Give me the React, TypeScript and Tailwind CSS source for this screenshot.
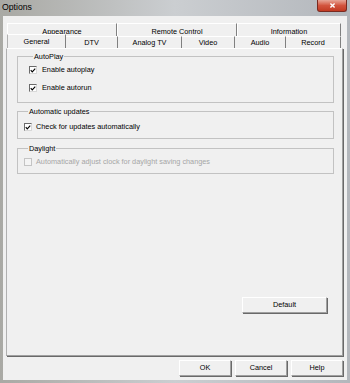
import React from "react";

const Check = ({ checked, disabled }: { checked?: boolean; disabled?: boolean }) => (
  <span
    className={`inline-flex shrink-0 w-[8px] h-[8px] items-center justify-center border ${
      disabled
        ? "border-[#c4c4c4] bg-[#f4f4f4]"
        : "border-t-[#6a6a6a] border-l-[#6a6a6a] border-r-[#d8d8d8] border-b-[#d8d8d8] bg-white"
    }`}
  >
    {checked && (
      <svg viewBox="0 0 8 8" className="w-[7px] h-[7px]">
        <path d="M1 3.6 L3 5.8 L7 1.4" stroke="#000" strokeWidth="1.5" fill="none" />
      </svg>
    )}
  </span>
);

const Btn = ({ label, w }: { label: string; w: string }) => (
  <div
    className={`${w} h-[16px] flex items-center justify-center bg-[#f0f0f0] border border-t-white border-l-white border-r-[#a0a0a0] border-b-[#a0a0a0] shadow-[1px_1px_0_#696969] text-[7.3px] leading-none`}
  >
    {label}
  </div>
);

const Group = ({ title, children, cls }: { title: string; children: React.ReactNode; cls: string }) => (
  <fieldset className={`border border-[#c2c2c2] ${cls}`}>
    <legend className="ml-[4px] px-[1px] text-[7.3px] leading-[9px]">{title}</legend>
    {children}
  </fieldset>
);

const backTabs = [
  { label: "Appearance", w: "w-[110px]" },
  { label: "Remote Control", w: "w-[120px]" },
  { label: "Information", w: "w-[104px]" },
];

const frontTabs = [
  { label: "DTV", w: "w-[52px]" },
  { label: "Analog TV", w: "w-[64px]" },
  { label: "Video", w: "w-[53px]" },
  { label: "Audio", w: "w-[51px]" },
  { label: "Record", w: "w-[55px]" },
];

export default function App() {
  return (
    <div className="w-[350px] h-[383px] flex flex-col overflow-hidden bg-gradient-to-r from-[#a9a9a4] via-[#cbced1] to-[#b3b7bc] font-['Liberation_Sans',Arial,sans-serif] text-black">
      {/* title bar */}
      <div className="h-[16px] shrink-0 flex items-start justify-between pl-[2px] pr-[3px]">
        <span className="text-[8.7px] leading-[14px]">Options</span>
        <div className="w-[30px] h-[12px] rounded-b-[3px] border border-t-0 border-[#7a2a20] bg-gradient-to-b from-[#e6a597] via-[#d2543e] to-[#c23a22] flex items-center justify-center">
          <svg viewBox="0 0 10 10" className="w-[7px] h-[7px]">
            <path d="M2 2 L8 8 M8 2 L2 8" stroke="#fff" strokeWidth="2" />
          </svg>
        </div>
      </div>

      {/* client area */}
      <div className="mx-[3px] h-[364px] bg-[#f0f0f0] flex flex-col">
        <div className="pl-[3px] pt-[7px] w-[340px] flex flex-col">
          {/* back tab row */}
          <div className="flex ml-[1px] h-[13px]">
            {backTabs.map((t) => (
              <div
                key={t.label}
                className={`${t.w} flex items-end justify-center pb-[1px] border-t border-l border-t-white border-l-white border-r border-r-[#808080] text-[7.3px] leading-none`}
              >
                {t.label}
              </div>
            ))}
          </div>
          {/* front tab row */}
          <div className="flex ml-[1px] h-[12px] relative z-10">
            <div className="w-[59px] h-[14px] -mt-[2px] flex items-start justify-center pt-[3px] bg-[#f0f0f0] border-t border-l border-t-white border-l-[#b0b0b0] border-r border-r-[#808080] text-[7.3px] leading-none">
              General
            </div>
            {frontTabs.map((t) => (
              <div
                key={t.label}
                className={`${t.w} flex items-end justify-center pb-[2px] border-t border-t-white border-r border-r-[#808080] text-[7.3px] leading-none`}
              >
                {t.label}
              </div>
            ))}
          </div>
          {/* panel */}
          <div className="h-[308px] w-[337px] border-l border-l-[#b0b0b0] border-t border-t-white border-r border-r-[#a0a0a0] border-b border-b-[#a0a0a0] shadow-[1px_1px_0_#696969] flex flex-col pl-[10px] pr-[8px] pt-[3px]">
            <Group title="AutoPlay" cls="pl-[11px] pt-[4px] pb-[9px]">
              <div className="flex flex-col gap-[8px]">
                <div className="h-[10px] flex items-center gap-[5px] text-[7.3px] leading-none">
                  <Check checked />
                  Enable autoplay
                </div>
                <div className="h-[10px] flex items-center gap-[5px] text-[7.3px] leading-none">
                  <Check checked />
                  Enable autorun
                </div>
              </div>
            </Group>
            <Group title="Automatic updates" cls="mt-[4px] pl-[6px] pt-[6px] pb-[6px]">
              <div className="h-[10px] flex items-center gap-[4px] text-[7.3px] leading-none">
                <Check checked />
                Check for updates automatically
              </div>
            </Group>
            <Group title="Daylight" cls="mt-[5px] pl-[6px] pt-[4px] pb-[6px]">
              <div className="h-[10px] flex items-center gap-[4px] text-[7.3px] leading-none text-[#a6a6a6]">
                <Check disabled />
                Automatically adjust clock for daylight saving changes
              </div>
            </Group>
            <div className="mt-[123px] self-end mr-[7px]">
              <Btn label="Default" w="w-[85px]" />
            </div>
          </div>
        </div>
        {/* dialog buttons */}
        <div className="mt-[4px] flex justify-end gap-[4px] pr-[4px]">
          <Btn label="OK" w="w-[52px]" />
          <Btn label="Cancel" w="w-[52px]" />
          <Btn label="Help" w="w-[52px]" />
        </div>
      </div>
    </div>
  );
}
